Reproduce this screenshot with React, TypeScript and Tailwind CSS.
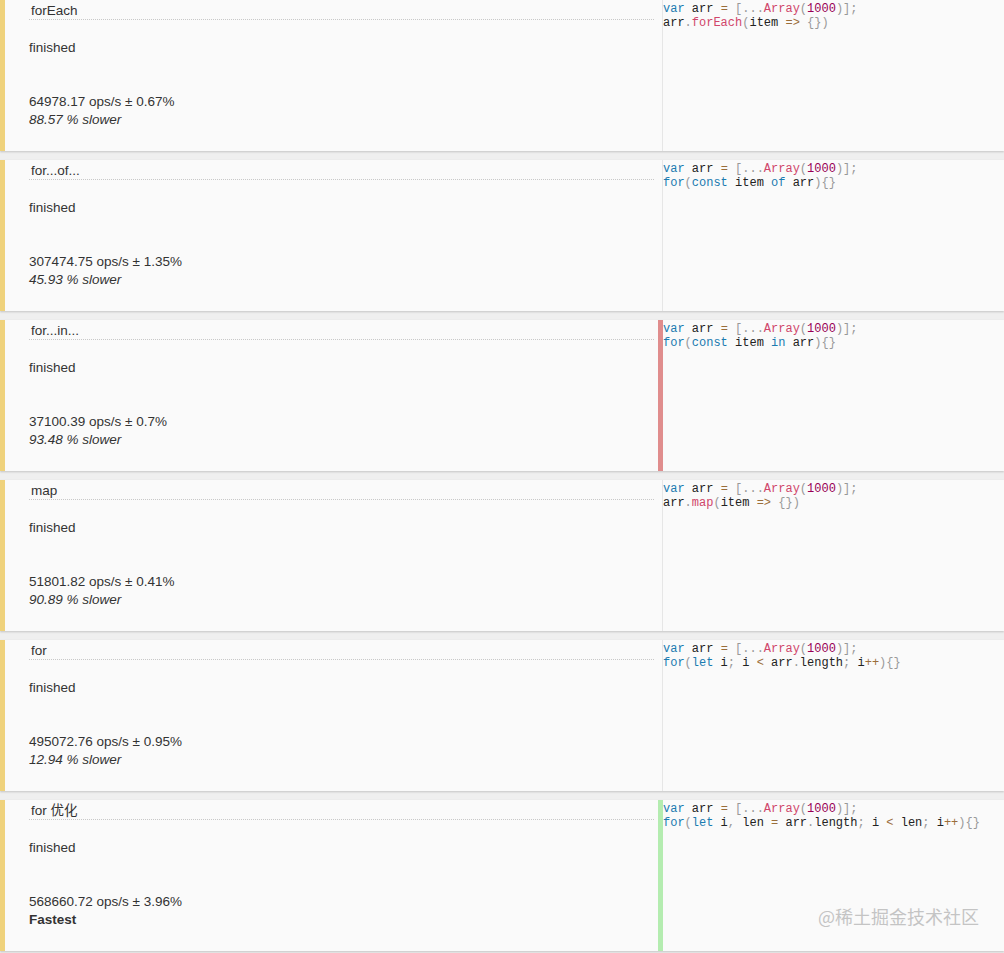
import React from "react";

type Tok = [string, string];

const K = "text-[#1b7bb0]";
const F = "text-[#d0466a]";
const N = "text-[#990055]";
const P = "text-[#999999]";
const O = "text-[#9a6e3a]";
const T = "text-[#222222]";

const line1: Tok[] = [
  ["var", K], [" arr ", T], ["=", O], [" ", T], ["[", P], ["...", P], ["Array", F], ["(", P], ["1000", N], [")", P], ["]", P], [";", P],
];

type Row = {
  title: string;
  ops: string;
  note: string;
  fastest?: boolean;
  bar?: string;
  code: Tok[];
};

const rows: Row[] = [
  {
    title: "forEach",
    ops: "64978.17 ops/s ± 0.67%",
    note: "88.57 % slower",
    code: [["arr", T], [".", P], ["forEach", F], ["(", P], ["item ", T], ["=>", O], [" ", T], ["{", P], ["}", P], [")", P]],
  },
  {
    title: "for...of...",
    ops: "307474.75 ops/s ± 1.35%",
    note: "45.93 % slower",
    code: [["for", K], ["(", P], ["const", K], [" item ", T], ["of", K], [" arr", T], [")", P], ["{", P], ["}", P]],
  },
  {
    title: "for...in...",
    ops: "37100.39 ops/s ± 0.7%",
    note: "93.48 % slower",
    bar: "red",
    code: [["for", K], ["(", P], ["const", K], [" item ", T], ["in", K], [" arr", T], [")", P], ["{", P], ["}", P]],
  },
  {
    title: "map",
    ops: "51801.82 ops/s ± 0.41%",
    note: "90.89 % slower",
    code: [["arr", T], [".", P], ["map", F], ["(", P], ["item ", T], ["=>", O], [" ", T], ["{", P], ["}", P], [")", P]],
  },
  {
    title: "for",
    ops: "495072.76 ops/s ± 0.95%",
    note: "12.94 % slower",
    code: [["for", K], ["(", P], ["let", K], [" i", T], [";", P], [" i ", T], ["<", O], [" arr", T], [".", P], ["length", T], [";", P], [" i", T], ["++", O], [")", P], ["{", P], ["}", P]],
  },
  {
    title: "for 优化",
    ops: "568660.72 ops/s ± 3.96%",
    note: "Fastest",
    fastest: true,
    bar: "green",
    code: [["for", K], ["(", P], ["let", K], [" i", T], [",", P], [" len ", T], ["=", O], [" arr", T], [".", P], ["length", T], [";", P], [" i ", T], ["<", O], [" len", T], [";", P], [" i", T], ["++", O], [")", P], ["{", P], ["}", P]],
  },
];

function CodeLine({ toks }: { toks: Tok[] }) {
  return (
    <div className="whitespace-pre h-[14px]">
      {toks.map((t, i) => (
        <span key={i} className={t[1]}>
          {t[0]}
        </span>
      ))}
    </div>
  );
}

function Card({ row, last }: { row: Row; last: boolean }) {
  const barCls =
    row.bar === "red"
      ? "border-[#e08d8d]"
      : row.bar === "green"
      ? "border-[#b4ecb0]"
      : "border-transparent";
  const innerCls =
    row.bar === "red"
      ? "border-[#e08d8d]"
      : row.bar === "green"
      ? "border-[#b4ecb0]"
      : "border-[#e6e6e6]";
  return (
    <div
      className={`relative flex h-[151px] bg-[#fafafa] border-l-[5px] border-[#efd27c] shadow-[0_1px_2px_rgba(0,0,0,0.18)] ${
        last ? "" : "mb-[9px]"
      }`}
    >
      <div className="w-[653px] shrink-0 pl-[24px] pr-[4px] pt-[1px] text-[13.5px] leading-[18px] text-[#333333] font-['Liberation_Sans','Noto_Sans_CJK_SC',sans-serif]">
        <div className="h-[19px] leading-[20px] pl-[2px] border-b border-dotted border-[#c8c8c8]">{row.title}</div>
        <div className="mt-[19px]">finished</div>
        <div className="mt-[36px]">{row.ops}</div>
        {row.fastest ? (
          <div className="font-bold">{row.note}</div>
        ) : (
          <div className="italic">{row.note}</div>
        )}
      </div>
      <div className={`flex-1 flex border-l-[4px] ${barCls}`}>
        <div
          className={`flex-1 border-l ${innerCls} pt-[2px] text-[12px] leading-[14px] font-['Liberation_Mono',monospace]`}
        >
          <CodeLine toks={line1} />
          <CodeLine toks={row.code} />
        </div>
      </div>
      {last && (
        <div className="absolute left-[813px] top-[104px] text-[18px] leading-[24px] text-[#c4c4c4] font-['Noto_Sans_CJK_SC',sans-serif] [text-shadow:0_0_1px_rgba(255,255,255,0.9)]">
          @稀土掘金技术社区
        </div>
      )}
    </div>
  );
}

export default function App() {
  return (
    <div className="w-[1004px] h-[953px] bg-[#efefef] overflow-hidden">
      {rows.map((r, i) => (
        <Card key={i} row={r} last={i === rows.length - 1} />
      ))}
    </div>
  );
}
